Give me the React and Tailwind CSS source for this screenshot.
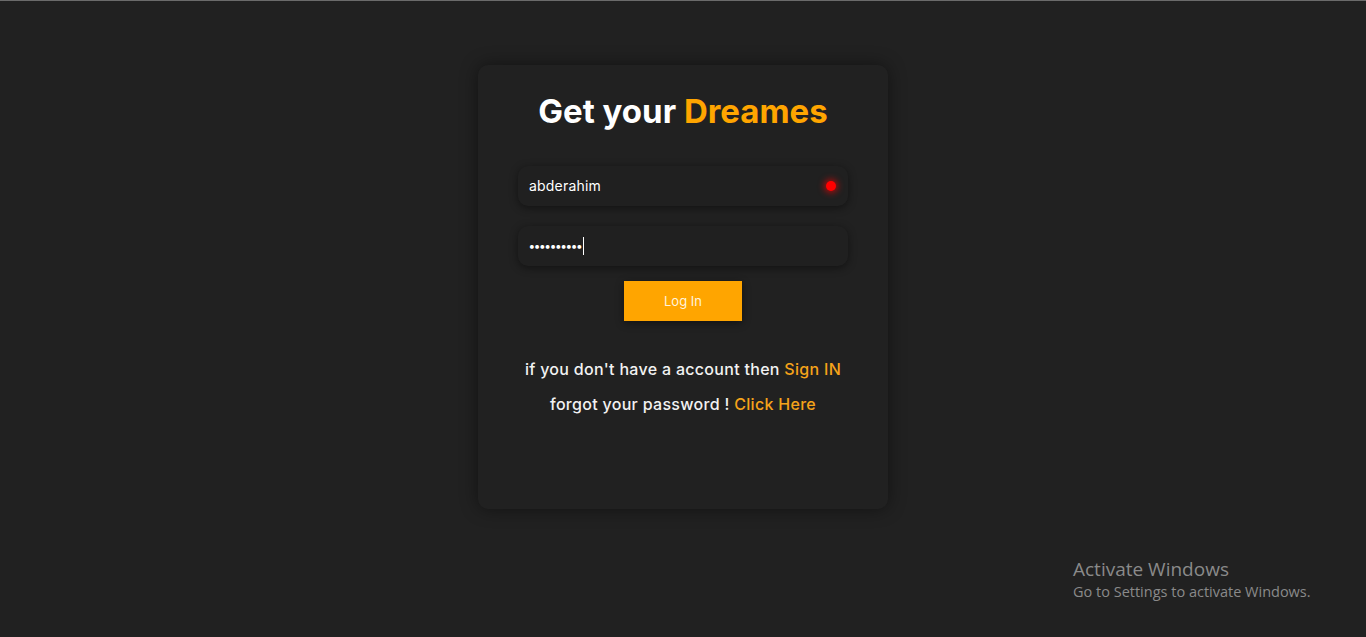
export default function App() {
  return (
    <div className="relative w-full h-[637px] bg-[#212121] border-t border-[#6b6b6b] overflow-hidden" style={{ fontFamily: '"Inter", "Noto Sans", sans-serif' }}>
      <div className="flex justify-center pt-[64px]">
        <div className="w-[410px] h-[444px] rounded-[10px] bg-[#212121] shadow-[0_0_18px_rgba(0,0,0,0.45)] flex flex-col items-center">
          <h1 className="mt-[24px] text-[33px] font-bold text-white leading-[44px]">
            Get your <span className="text-[#ffa500]">Dreames</span>
          </h1>
          <div className="mt-[33px] w-[330px] h-[40px] rounded-[10px] bg-[#202020] shadow-[0_2px_8px_rgba(0,0,0,0.45)] flex items-center justify-between pl-[11px] pr-[12px]">
            <span className="text-[14px] text-white tracking-[0.2px] -mt-[1px]">abderahim</span>
            <span className="w-[10px] h-[10px] rounded-full bg-[#ff0000] shadow-[0_0_6px_2px_rgba(255,0,0,0.6)] -mt-[1px]"></span>
          </div>
          <div className="mt-[20px] w-[330px] h-[40px] rounded-[10px] bg-[#202020] shadow-[0_2px_8px_rgba(0,0,0,0.45)] flex items-center pl-[11px]">
            <span className="text-[12px] text-white tracking-[-0.4px] font-bold leading-none">••••••••••</span>
            <span className="ml-[1px] w-[1px] h-[18px] bg-white"></span>
          </div>
          <button className="mt-[15px] w-[118px] h-[40px] bg-[#ffa500] text-[#fff3dc] text-[13px] pt-[1px] shadow-[0_2px_8px_rgba(0,0,0,0.45)]">
            Log In
          </button>
          <p className="mt-[38px] text-[16px] font-medium tracking-[0.3px] text-[#f2f2f2] leading-[20px]">
            if you don't have a account then <span className="text-[#f5a31a]">Sign IN</span>
          </p>
          <p className="mt-[15px] text-[16px] font-medium tracking-[0.3px] text-[#f2f2f2] leading-[20px]">
            forgot your password ! <span className="text-[#f5a31a]">Click Here</span>
          </p>
        </div>
      </div>
      <div className="absolute left-[1073px] top-[556px] text-[#8a8a8a]" style={{ fontFamily: '"Open Sans", "Noto Sans", sans-serif' }}>
        <div className="text-[19px] leading-[25px]">Activate Windows</div>
        <div className="text-[14.5px] leading-[20px]">Go to Settings to activate Windows.</div>
      </div>
    </div>
  );
}
